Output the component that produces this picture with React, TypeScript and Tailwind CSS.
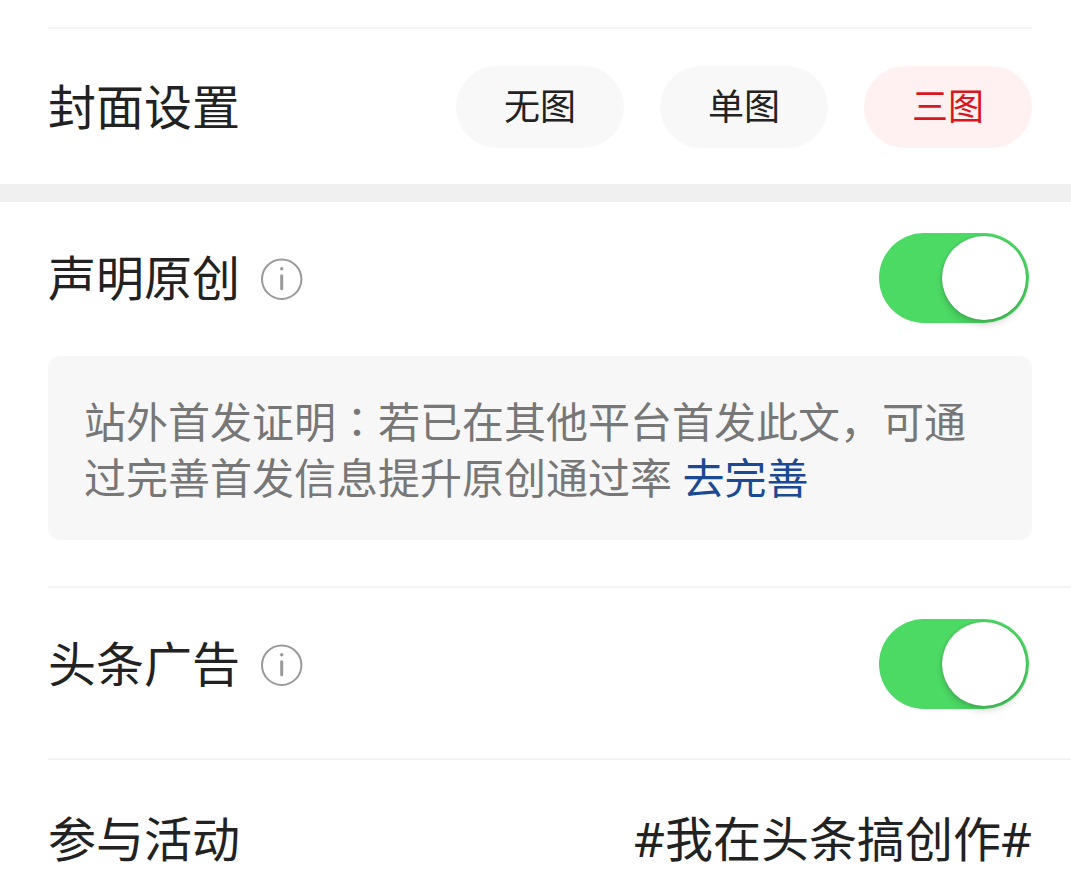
import { useState } from "react";

function InfoIcon() {
  return (
    <svg viewBox="0 0 42 42" className="size-[42px] overflow-visible" fill="none" aria-hidden="true">
      <circle cx="21.7" cy="22.2" r="19.7" stroke="#999999" strokeWidth="2" />
      <circle cx="21.7" cy="11.8" r="1.7" fill="#999999" />
      <path d="M21.7 18.8v13" stroke="#999999" strokeWidth="3" strokeLinecap="round" />
    </svg>
  );
}

function SwitchRow({ id, label }: { id: string; label: string }) {
  const [on, setOn] = useState(true);
  return (
    <div className="flex h-[152px] items-center justify-between pr-[42px]">
      <div className="flex items-center gap-5">
        <label htmlFor={id} className="text-5xl leading-[72px]">
          {label}
        </label>
        <button type="button" aria-label={`${label}说明`}>
          <InfoIcon />
        </button>
      </div>
      <input
        id={id}
        type="checkbox"
        role="switch"
        checked={on}
        onChange={(e) => setOn(e.target.checked)}
        className="flex h-[90px] w-[150px] cursor-pointer appearance-none items-center rounded-full bg-[#dddddd] p-[3px] before:size-[84px] before:rounded-full before:bg-white before:shadow-[0_5px_6px_rgba(0,0,0,0.15),0_0_3px_rgba(0,0,0,0.2)] checked:justify-end checked:bg-[#4cd964]"
      />
    </div>
  );
}

const covers = ["无图", "单图", "三图"];

export default function App() {
  const [cover, setCover] = useState("三图");
  return (
    <main
      lang="zh-CN"
      className="min-h-screen bg-white pt-[27px] font-['Noto_Sans','Noto_Sans_CJK_SC',sans-serif] text-[#222222]"
    >
      <section className="mr-[39px] ml-12 flex h-[157px] items-center justify-between border-t-2 border-[#f4f4f4]">
        <h2 className="text-5xl leading-[72px]">封面设置</h2>
        <div className="flex gap-9">
          {covers.map((name) => (
            <button
              key={name}
              type="button"
              aria-pressed={cover === name}
              onClick={() => setCover(name)}
              className={`h-[82px] w-[168px] rounded-full text-4xl ${
                cover === name ? "bg-[#fff1f1] text-[#d7171f]" : "bg-[#f8f8f8]"
              }`}
            >
              {name}
            </button>
          ))}
        </div>
      </section>

      <div className="h-[18px] bg-[#f0f0f0]" />

      <section className="pl-12">
        <SwitchRow id="original" label="声明原创" />
        <p className="mt-0.5 mr-[39px] rounded-xl bg-[#f7f7f7] px-9 pt-10 pb-8 font-['Roboto','Noto_Sans_CJK_SC',sans-serif] text-[42px] leading-[56px] text-[#777777]">
          站外首发证明
          <span className="font-['Roboto','Noto_Sans_CJK_JP',sans-serif]" lang="ja">
            ：
          </span>
          若已在其他平台首发此文，可通过完善首发信息提升原创通过率{" "}
          <a href="#complete" className="text-[#1a4a93]">
            去完善
          </a>
        </p>
      </section>

      <section className="mt-[46px] ml-12 border-t-2 border-[#f4f4f4] pb-[18px]">
        <SwitchRow id="ads" label="头条广告" />
      </section>

      <section className="ml-12 flex items-center justify-between border-t-2 border-[#f4f4f4] pt-[43px] pr-[39px] text-5xl leading-[72px]">
        <h2>参与活动</h2>
        <a href="#activity">#我在头条搞创作#</a>
      </section>
    </main>
  );
}
